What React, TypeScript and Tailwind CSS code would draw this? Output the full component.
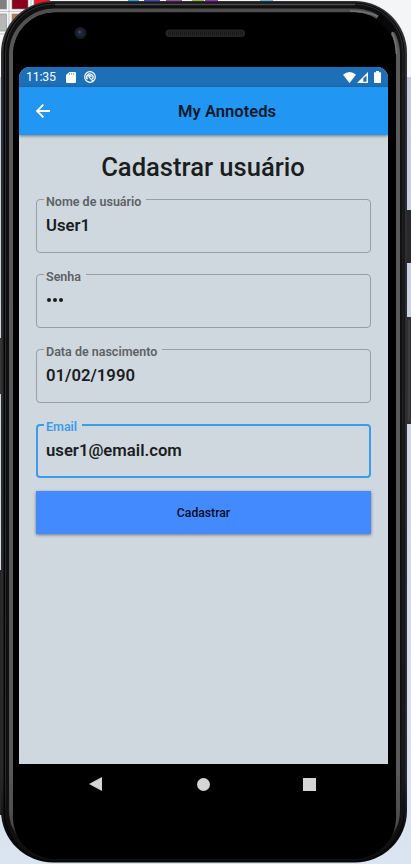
import type { ReactNode } from "react";

function PhoneFrame() {
  return (
    <svg className="absolute inset-0" width="411" height="864" viewBox="0 0 411 864" aria-hidden="true">
      <defs>
        <linearGradient id="backdrop" x1="0" y1="0" x2="0" y2="1">
          <stop offset="0" stopColor="#c3cbe0" />
          <stop offset="0.5" stopColor="#cfd7e8" />
          <stop offset="1" stopColor="#dbe4f1" />
        </linearGradient>
        <linearGradient id="rim" x1="0" y1="0" x2="0" y2="1">
          <stop offset="0" stopColor="#4e4e4e" />
          <stop offset="0.05" stopColor="#5a5a5a" />
          <stop offset="0.9" stopColor="#5a5a5a" />
          <stop offset="0.965" stopColor="#4a4a4a" />
          <stop offset="0.985" stopColor="#000" />
        </linearGradient>
        <linearGradient id="edge" x1="0" y1="0" x2="0" y2="1">
          <stop offset="0" stopColor="#303033" />
          <stop offset="0.9" stopColor="#2a2a2d" />
          <stop offset="0.97" stopColor="#0a0a0b" />
        </linearGradient>
      </defs>
      <rect width="411" height="864" fill="#f4f5f7" />
      <rect y="77" width="411" height="787" fill="url(#backdrop)" />
      <g stroke="#8a8a8a" strokeWidth="0.6">
        <rect x="-8" y="-6" width="14.5" height="15" fill="#808080" />
        <rect x="12" y="-6" width="16" height="15" fill="#88001b" />
        <rect x="34" y="-6" width="16" height="15" fill="#ec1c24" />
        <rect x="-8" y="14" width="14.5" height="17" fill="#b8b8b8" />
        <rect x="12" y="14" width="16" height="15" fill="#b97a57" />
        <path d="M9 0V36M31 0V12M0 11.5H36M0 34H16" fill="none" stroke="#aaa" />
      </g>
      <rect x="128" width="11" height="2" fill="#23a2d9" />
      <rect x="144" width="16" height="2" fill="#3f48cc" />
      <rect x="166" width="16" height="2" fill="#a349a4" />
      <rect x="192" width="12" height="2" fill="#8fbf35" />
      <rect x="205" width="13" height="2" fill="#a42bc0" />
      <rect x="260" width="13" height="2" fill="#63b9dc" />
      <rect x="0" y="338" width="5" height="56" fill="#393939" />
      <rect x="0" y="570" width="5" height="245" fill="#252525" />
      <rect x="405" y="210" width="7" height="53" fill="#29292b" />
      <rect x="405" y="317" width="7" height="107" fill="#303030" />
      <path d="M409 320V421" stroke="#4c4c4c" />
      <rect x="1" y="1" width="406" height="861.5" rx="52" fill="url(#edge)" />
      <rect x="3.5" y="2.5" width="401" height="859" rx="50" fill="#050506" />
      <rect x="5.5" y="4" width="397.5" height="856.5" rx="48" fill="#101011" stroke="url(#edge)" />
      <path d="M55 4.5H355" stroke="#4a4a4a" strokeWidth="1.5" />
      <path d="M11 810V54.5A44 44 0 0 1 55 10.5H354A44 44 0 0 1 398 54.5V810A44 44 0 0 1 354 854H55A44 44 0 0 1 11 810Z" fill="#000" stroke="url(#rim)" strokeWidth="4" />
      <path d="M13 800V54A42 42 0 0 1 55 12.5H354A42 42 0 0 1 396 54V814A42 42 0 0 1 354 859H55A42 42 0 0 1 13 814Z" fill="#000" />
      <path d="M378 16.5A44 44 0 0 1 393 32.5" fill="none" stroke="#080808" strokeWidth="7" />
      <path d="M350 11Q367 11 378 16.5" fill="none" stroke="#777" strokeWidth="1.5" />
      <path d="M392 32Q396 42 396.5 54" fill="none" stroke="#777" strokeWidth="1.5" />
      <circle cx="80.5" cy="33" r="6" fill="#1b1c20" />
      <circle cx="80.5" cy="33" r="3.5" fill="#20283f" />
      <circle cx="79.5" cy="32" r="1.3" fill="#3c4a6c" />
      <rect x="165.5" y="29.5" width="79.5" height="7.5" rx="3.5" fill="#252525" />
      <path d="M168 33.3H243" stroke="#181818" strokeWidth="4" strokeDasharray="1 1" />
    </svg>
  );
}

function StatusBar() {
  return (
    <div className="flex h-5 items-center bg-[#1d6fb7] pr-[7px] pl-[7px] text-white">
      <span className="w-[40px] text-[12.3px] leading-5 tracking-[-0.2px]">11:35</span>
      <svg width="10" height="11" viewBox="0 0 9 11" preserveAspectRatio="none" aria-hidden="true">
        <path d="M3 0H8Q9 0 9 1V10Q9 11 8 11H1Q0 11 0 10V3Z" fill="currentColor" />
        <path d="M3.2 1.2V2.8M5 1.2V2.8M6.8 1.2V2.8" stroke="#1d6fb7" strokeWidth="0.6" />
      </svg>
      <svg className="ml-2" width="12" height="12" viewBox="0 0 12 12" fill="none" stroke="currentColor" aria-hidden="true">
        <circle cx="6" cy="6" r="5.3" strokeWidth="1.2" />
        <path d="M3.5 8.3A3.2 3.2 0 1 1 8.5 8M4.1 5.4Q6 4.1 7.5 5.6M5 6.1L9 10" strokeWidth="1.3" />
      </svg>
      <svg className="ml-auto" width="13" height="11" viewBox="0 0 13 11" aria-hidden="true">
        <path d="M0 2.8Q6.5 -2.6 13 2.8L6.5 11Z" fill="currentColor" />
      </svg>
      <svg className="ml-[1px]" width="11" height="11" viewBox="0 0 11 11" aria-hidden="true">
        <path d="M0 11L11 0V11Z" fill="currentColor" />
        <path d="M6.3 6.5L9.5 3.4V9.8H6.3Z" fill="#1d6fb7" />
      </svg>
      <svg className="ml-[6px]" width="7" height="12" viewBox="0 0 7 12" aria-hidden="true">
        <path d="M2 0H5V1.2H6.3Q7 1.2 7 2V11.2Q7 12 6.3 12H.7Q0 12 0 11.2V2Q0 1.2.7 1.2H2Z" fill="currentColor" />
      </svg>
    </div>
  );
}

function Field({ label, focused = false, children }: { label: string; focused?: boolean; children: ReactNode }) {
  return (
    <fieldset
      className={
        focused
          ? "mt-px h-[58px] rounded-[4px] border-2 border-[#3d9bea] px-[6px]"
          : "h-[59px] rounded-[4px] border border-[#979ea5] px-[7px]"
      }
    >
      <legend
        className={
          focused
            ? "h-[10px] pr-[5px] pl-[2px] text-[12.5px] leading-[13px] font-semibold text-[#3d9bea]"
            : "h-[10px] pr-[5px] pl-[2px] text-[12.5px] leading-[15px] font-semibold text-[#5c6165]"
        }
      >
        {label}
      </legend>
      <div
        className={
          focused
            ? "mt-[5px] flex h-8 items-center pl-[2px] text-[16.7px] font-semibold text-[#1a1d1f]"
            : "mt-[6px] flex h-8 items-center pl-[2px] text-[16.7px] font-semibold text-[#1a1d1f]"
        }
      >
        {children}
      </div>
    </fieldset>
  );
}

export default function App() {
  return (
    <div className="relative h-[864px] w-[411px] overflow-hidden font-[Roboto,sans-serif]">
      <PhoneFrame />
      <div className="relative flex h-[864px] flex-col pt-[67px] pr-[23px] pl-[19px]">
        <div className="flex h-[697px] flex-col overflow-hidden rounded-t-[11px] bg-[#cfd8de]">
          <StatusBar />
          <header className="flex h-12 items-center bg-[#2196f3] shadow-[0_1px_3px_rgba(0,0,0,0.45)]">
            <svg className="ml-[17px]" width="14" height="14" viewBox="0 0 14 14" fill="none" stroke="white" strokeWidth="1.9" aria-hidden="true">
              <path d="M14 7H1.4M7.4.7L1.1 7L7.4 13.3" />
            </svg>
            <h1 className="ml-[128px] pt-[2px] text-[16.6px] font-semibold whitespace-nowrap text-[#08192a]">My Annoteds</h1>
          </header>
          <main className="flex flex-col px-[17px]">
            <h2 className="mt-4 h-[43px] pr-px text-center text-[25.6px] leading-8 font-medium whitespace-nowrap text-[#1b1e20]">Cadastrar usuário</h2>
            <div className="flex flex-col gap-4">
              <Field label="Nome de usuário">User1</Field>
              <Field label="Senha">
                <span className="flex gap-[2px] pb-[3px] pl-px">
                  <i className="size-1 rounded-full bg-[#1a1d1f]" />
                  <i className="size-1 rounded-full bg-[#1a1d1f]" />
                  <i className="size-1 rounded-full bg-[#1a1d1f]" />
                </span>
              </Field>
              <Field label="Data de nascimento">01/02/1990</Field>
              <Field label="Email" focused>user1@email.com</Field>
            </div>
            <button className="mt-[13px] h-[43px] bg-[#448aff] pt-px text-[12.2px] font-medium text-[#030b1c] shadow-[0_1px_3px_rgba(0,0,0,0.45)]">Cadastrar</button>
          </main>
        </div>
        <nav className="flex h-10 items-center bg-black text-[#d5d5d5]">
          <svg className="ml-[70px]" width="13" height="14" viewBox="0 0 13 14" aria-label="Voltar">
            <path d="M0 7L13 0V14Z" fill="currentColor" />
          </svg>
          <svg className="ml-[95px]" width="13" height="13" viewBox="0 0 13 13" aria-label="Início">
            <circle cx="6.5" cy="6.5" r="6.5" fill="currentColor" />
          </svg>
          <svg className="ml-[93px]" width="13" height="13" viewBox="0 0 13 13" aria-label="Recentes">
            <path d="M0 0H13V13H0Z" fill="currentColor" />
          </svg>
        </nav>
      </div>
    </div>
  );
}
